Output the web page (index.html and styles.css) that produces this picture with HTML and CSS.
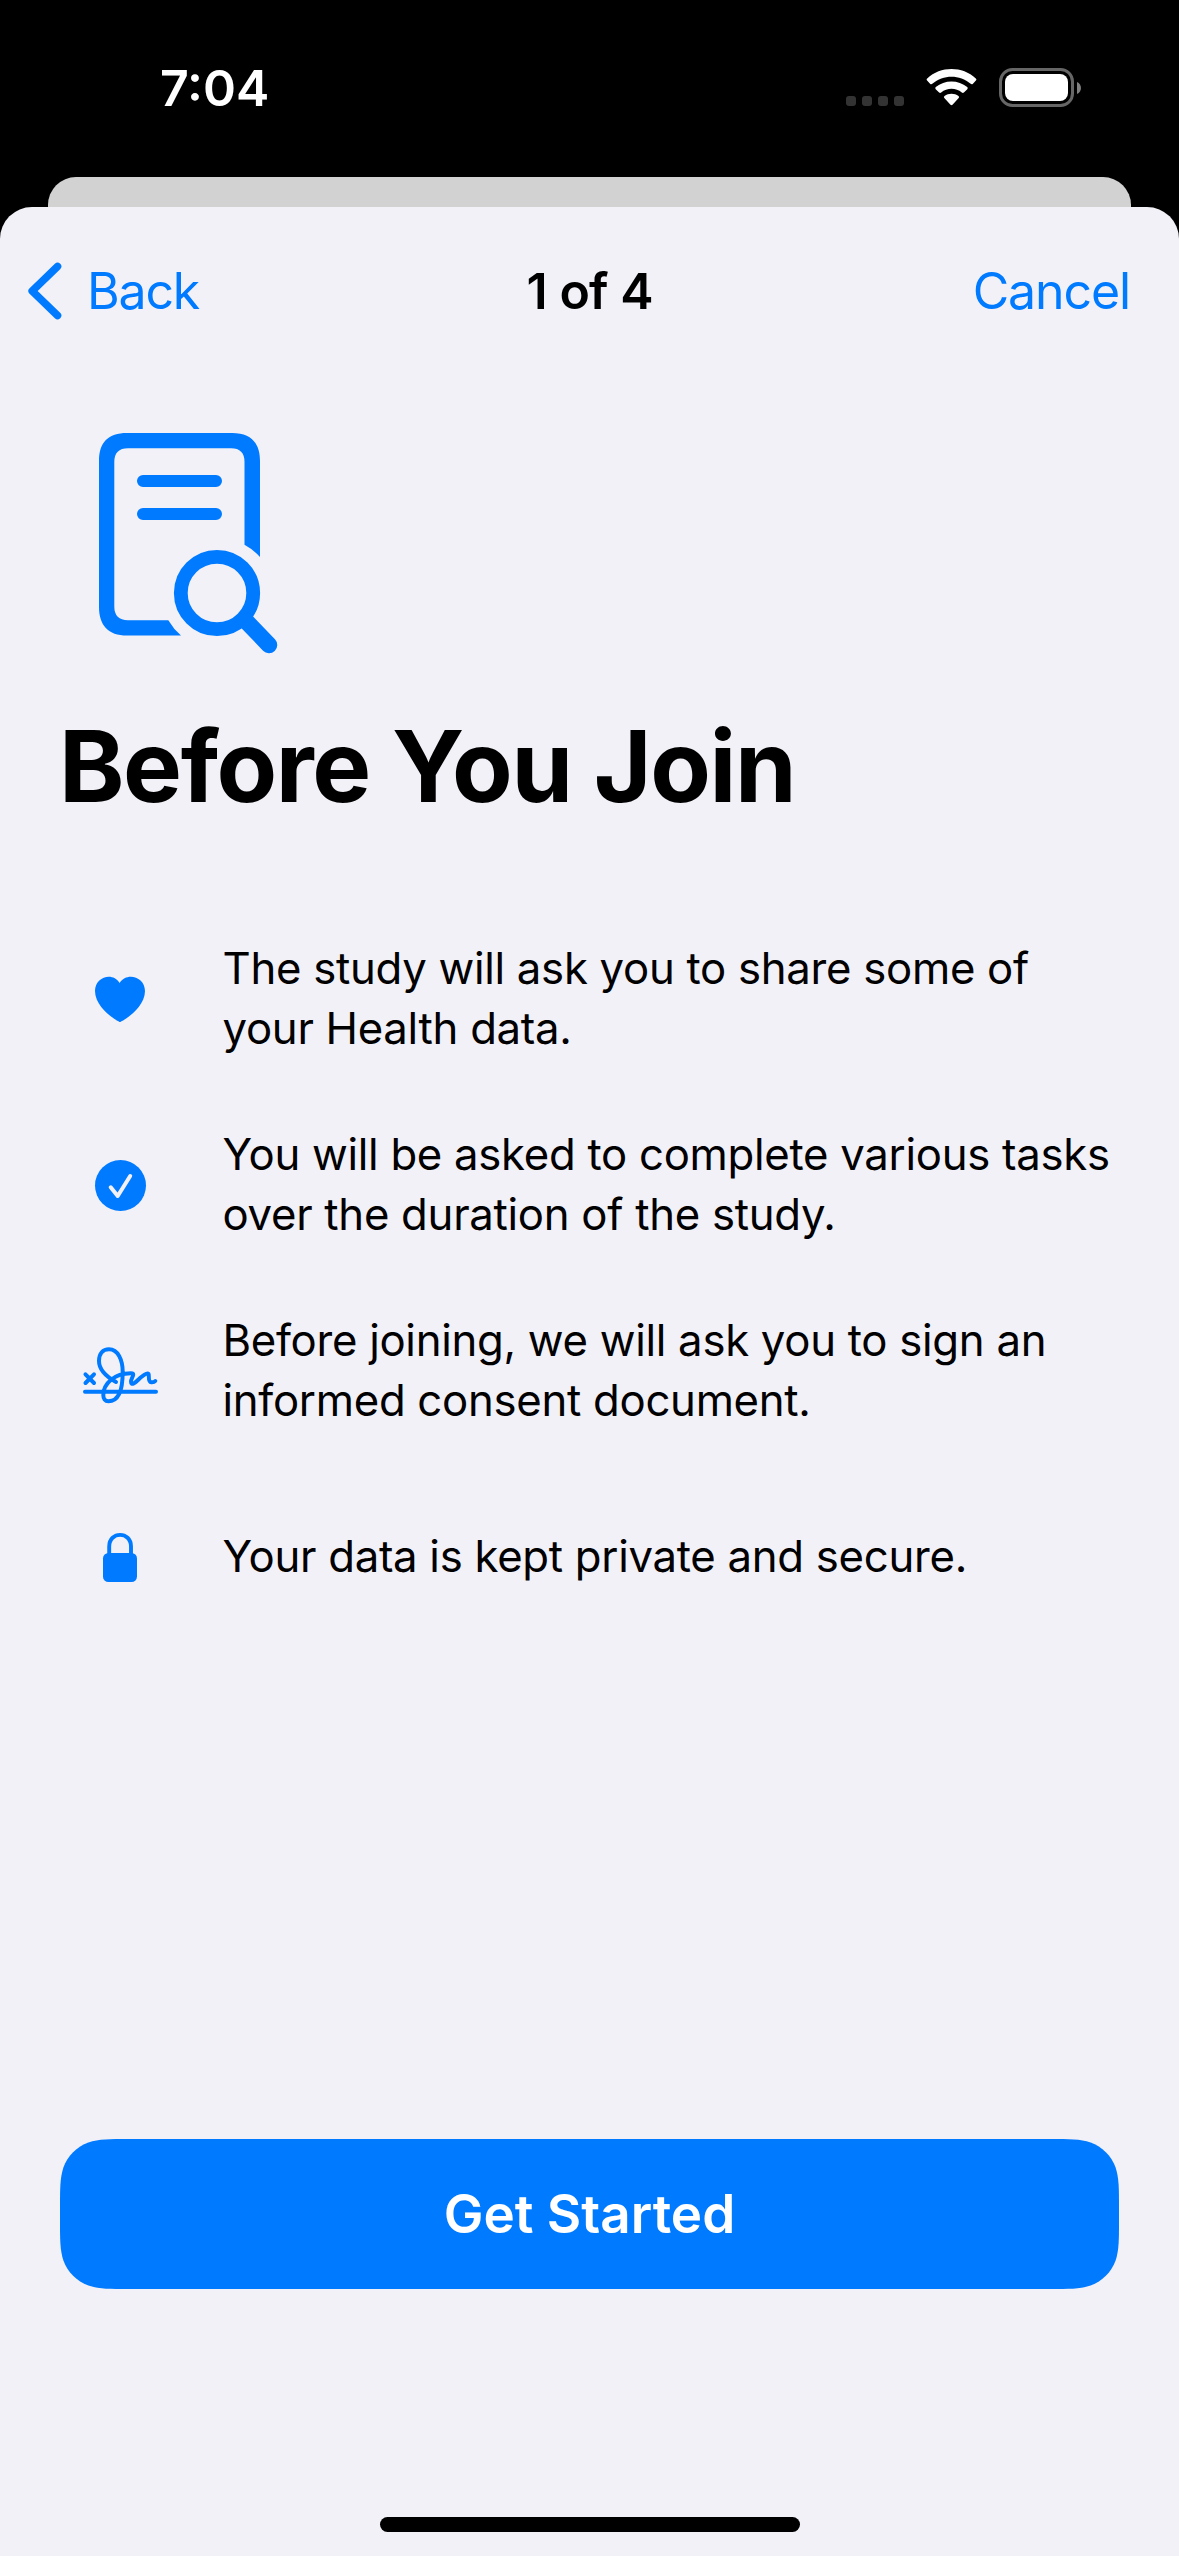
FILE: index.html
```html
<!DOCTYPE html>
<html lang="en">
<head>
<meta charset="utf-8">
<title>Before You Join</title>
<link rel="stylesheet" href="styles.css">
</head>
<body>
<div class="screen">
  <header class="status">
    <span class="time">7:04</span>
    <svg class="status-icons" width="240" height="42" viewBox="0 0 240 42">
      <g fill="#333"><rect x="0" y="29" width="10" height="10" rx="3"/><rect x="16" y="29" width="10" height="10" rx="3"/><rect x="32" y="29" width="10" height="10" rx="3"/><rect x="48" y="29" width="10" height="10" rx="3"/></g>
      <g fill="#fff">
        <path d="M81.2 11.4C94.500-1.2 116.500-1.200 129.800 11.400Q130.900 12.500 129.900 13.600L126.700 16.900Q125.700 17.700 124.700 16.800C113.800 7.400 97.200 7.400 86.300 16.800Q85.300 17.700 84.300 16.900L81.100 13.600Q80.100 12.500 81.200 11.400Z"/>
        <path d="M89.800 20.100C98.500 12.500 112.500 12.500 121.200 20.100Q122.300 21.200 121.300 22.200L117.900 25.500Q116.900 26.400 115.800 25.500C110 20.500 101 20.500 95.200 25.500Q94.100 26.400 93.100 25.500L89.700 22.200Q88.700 21.200 89.800 20.100Z"/>
        <path d="M98.500 28.900C102.500 26 108.500 26 112.500 28.900Q113.700 30 112.700 31L106.500 37.800Q105.500 38.700 104.500 37.800L98.300 31Q97.300 30 98.500 28.900Z"/>
        <rect x="159" y="7" width="63" height="27" rx="8"/>
      </g>
      <rect x="154.500" y="2.500" width="72" height="36" rx="12" fill="none" stroke="#666" stroke-width="3"/>
      <path d="M231 15C236.300 17.200 236.300 24.800 231 27Z" fill="#808080"/>
    </svg>
  </header>
  <div class="backdrop-card"></div>
  <main class="sheet">
    <nav class="nav">
      <a class="back"><svg width="34" height="58" viewBox="0 0 34 58"><path d="M29.500 4.500L4.200 29L29.500 53.500" fill="none" stroke="#007aff" stroke-width="7.600" stroke-linecap="round" stroke-linejoin="round"/></svg><span>Back</span></a>
      <span class="nav-title">1 of 4</span>
      <a class="cancel">Cancel</a>
    </nav>
    <svg class="hero" width="180" height="222" viewBox="0 0 180 222" fill="none" stroke="#007aff">
      <path fill="#007aff" stroke="none" d="M62 203.600H28C9 203.600 0 193 0 175V29C0 10.500 9 1 28 1H133C152 1 161 11 161 29V125Q154 117.500 145.500 112.800V30Q145.500 16.300 132 16.300H29Q15.300 16.300 15.300 30V174.500Q15.300 188.200 29 188.200H69.300Q74.500 197 82 203.600Z"/>
      <path d="M44 49H117M44 82H117" stroke-width="12" stroke-linecap="round"/>
      <circle cx="118" cy="161" r="36.200" stroke-width="13.800"/>
      <path d="M146 188L170 213" stroke-width="16.500" stroke-linecap="round"/>
    </svg>
    <h1 class="title">Before You Join</h1>
    <ul class="list">
      <li class="row">
        <svg class="icon" width="80" height="64" viewBox="0 0 80 64"><path fill="#007aff" d="M40 55C38.500 55 15 41.500 15 24C15 9.500 33 4.500 39.600 16C46.500 4.500 65 9.500 65 24C65 41.500 41.500 55 40 55Z"/></svg>
        <p>The study will ask you to share some of<br>your Health data.</p>
      </li>
      <li class="row">
        <svg class="icon" width="80" height="64" viewBox="0 0 80 64"><circle cx="40.500" cy="32.500" r="25.500" fill="#007aff"/><path d="M30.700 34.300L37.700 43L50.200 23" fill="none" stroke="#f2f1f7" stroke-width="4" stroke-linecap="round" stroke-linejoin="round"/></svg>
        <p>You will be asked to complete various tasks<br>over the duration of the study.</p>
      </li>
      <li class="row">
        <svg class="icon" width="80" height="64" viewBox="0 -2 80 64" fill="none" stroke="#007aff" stroke-width="4" stroke-linecap="round" stroke-linejoin="round"><path d="M5 50.700H76M5.500 33.300L14 42M14 33.300L5.500 42"/><path d="M36 41C27 36 19 28.500 19 20C19 12.500 23 8.300 29 8.300C38 8.300 42.700 19 42.700 31C42.700 47 39 60.300 28.500 60.300C25 60.300 23.300 57.500 23.300 54C23.300 43 34 32.300 51 32.300C56 32.300 51 37 51 40.500C51 45 55 42 58 39C62 35 67 31.300 68.500 32.800C69.500 34 67.500 41 71.300 41.300Q74 41.500 75.300 40"/></svg>
        <p>Before joining, we will ask you to sign an<br>informed consent document.</p>
      </li>
      <li class="row">
        <svg class="icon" width="80" height="64" viewBox="0 0 80 64"><rect x="23" y="28" width="34" height="29" rx="5.500" fill="#007aff"/><path d="M29.200 29V21.500C29.200 6 51 6 51 21.500V29" fill="none" stroke="#007aff" stroke-width="3.900"/></svg>
        <p>Your data is kept private and secure.</p>
      </li>
    </ul>
    <button class="cta"><svg class="cta-shape" width="1059" height="150" viewBox="0 0 1059 150"><path fill="#007aff" d="M68.800 0H990.200C1010 0 1019.900 0 1030.600 3.400C1042.200 7.600 1051.400 16.800 1055.600 28.400C1059 39.100 1059 49 1059 68.800V81.200C1059 101 1059 110.900 1055.600 121.600C1051.400 133.200 1042.200 142.400 1030.600 146.600C1019.900 150 1010 150 990.200 150H68.800C49 150 39.100 150 28.400 146.600C16.800 142.400 7.600 133.200 3.400 121.600C0 110.900 0 101 0 81.200V68.800C0 49 0 39.100 3.400 28.400C7.600 16.800 16.800 7.600 28.400 3.400C39.100 0 49 0 68.800 0Z"/></svg><span>Get Started</span></button>
    <div class="home"></div>
  </main>
</div>
</body>
</html>
```
FILE: styles.css
```css
* { box-sizing: border-box; margin: 0; padding: 0; }
body { background: #000; font-family: Inter, "Liberation Sans", sans-serif; color: #000; }
svg { display: block; flex: none; }
.screen { width: 1179px; height: 2556px; display: flex; flex-direction: column; overflow: hidden; background: #000; }
.status { height: 177px; flex: none; display: flex; justify-content: space-between; align-items: flex-start; padding: 58px 93px 0 160px; }
.time { color: #fff; font-size: 50px; font-weight: 600; line-height: 60px; letter-spacing: 0; }
.status-icons { margin: 9px 0 0; }
.backdrop-card { height: 30px; flex: none; margin: 0 48px; background: #d2d2d2; border-radius: 28px 28px 0 0; }
.sheet { flex: 1; display: flex; flex-direction: column; background: #f2f1f7; border-radius: 32px 32px 0 0; }
.nav { height: 168px; flex: none; display: grid; grid-template-columns: 1fr auto 1fr; align-items: center; padding: 0 49px; font-size: 50px; line-height: 60px; }
.back { display: flex; align-items: center; gap: 25px; margin-left: -21px; color: #007aff; letter-spacing: -1.2px; }
.nav-title { font-weight: 600; letter-spacing: -0.9px; word-spacing: 1px; }
.cancel { color: #007aff; justify-self: end; letter-spacing: -1.1px; }
.hero { margin: 57px 0 0 99px; }
.title { margin: 52px 0 0 59px; font-size: 99px; line-height: 120px; font-weight: 700; letter-spacing: -1.4px; white-space: nowrap; }
.list { list-style: none; margin: 113px 0 0 80px; display: flex; flex-direction: column; gap: 66px; }
.row { display: flex; align-items: center; gap: 62.5px; height: 120px; font-size: 43.7px; line-height: 60px; letter-spacing: -0.28px; white-space: nowrap; }
.icon { overflow: visible; }
.cta { position: relative; width: 1059px; height: 150px; margin: auto 60px 0; border: 0; background: none; font: 600 53px/60px Inter, "Liberation Sans", sans-serif; color: #fff; flex: none; }
.cta-shape { position: absolute; inset: 0; }
.cta span { position: relative; }
.home { flex: none; width: 420px; height: 15px; border-radius: 8px; background: #000; margin: 228px auto 24px; }
```
